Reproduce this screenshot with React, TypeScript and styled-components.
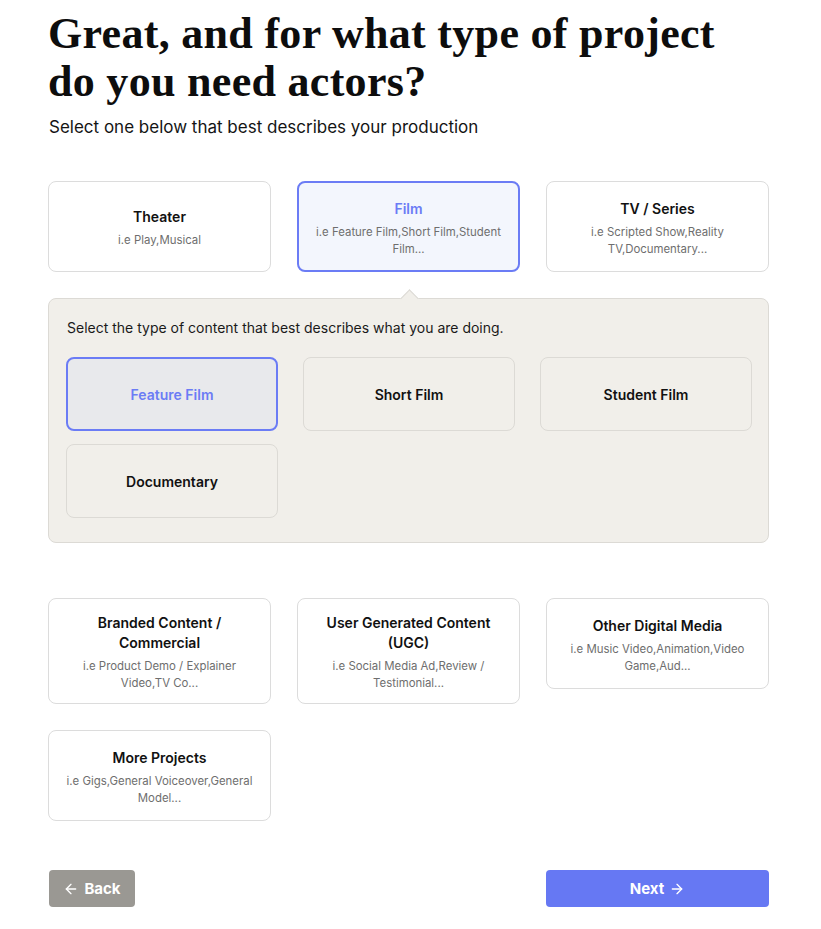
import React, { FC, useState } from 'react';
import styled, { createGlobalStyle, css } from 'styled-components';
import { ArrowLeft, ArrowRight } from 'lucide-react';

type Project = { id: string; title: string; hint: string };
type ContentType = { id: string; label: string };

const topProjects: Project[] = [
	{ id: 'theater', title: 'Theater', hint: 'i.e Play,Musical' },
	{ id: 'film', title: 'Film', hint: 'i.e Feature Film,Short Film,Student Film...' },
	{ id: 'tv', title: 'TV / Series', hint: 'i.e Scripted Show,Reality TV,Documentary...' },
];

const moreProjects: Project[] = [
	{ id: 'branded', title: 'Branded Content / Commercial', hint: 'i.e Product Demo / Explainer Video,TV Co...' },
	{ id: 'ugc', title: 'User Generated Content (UGC)', hint: 'i.e Social Media Ad,Review / Testimonial...' },
	{ id: 'digital', title: 'Other Digital Media', hint: 'i.e Music Video,Animation,Video Game,Aud...' },
	{ id: 'more', title: 'More Projects', hint: 'i.e Gigs,General Voiceover,General Model...' },
];

const filmTypes: ContentType[] = [
	{ id: 'feature', label: 'Feature Film' },
	{ id: 'short', label: 'Short Film' },
	{ id: 'student', label: 'Student Film' },
	{ id: 'doc', label: 'Documentary' },
];

const ProjectType: FC = () => {
	const [project, setProject] = useState('film');
	const [content, setContent] = useState('feature');

	const renderCard = (p: Project) => (
		<Card key={p.id} active={project === p.id} onClick={() => setProject(p.id)}>
			<CardTitle active={project === p.id}>{p.title}</CardTitle>
			<CardHint>{p.hint}</CardHint>
		</Card>
	);

	return (
		<Page>
			<GlobalStyle />
			<Heading>Great, and for what type of project do you need actors?</Heading>
			<Lead>Select one below that best describes your production</Lead>

			<Grid>
				{topProjects.map(renderCard)}

				<Panel>
					<Caret />
					<PanelLead>Select the type of content that best describes what you are doing.</PanelLead>
					<SubGrid>
						{filmTypes.map((t) => (
							<SubOption key={t.id} active={content === t.id} onClick={() => setContent(t.id)}>
								{t.label}
							</SubOption>
						))}
					</SubGrid>
				</Panel>

				{moreProjects.map(renderCard)}
			</Grid>

			<Footer>
				<BackButton>
					<ArrowLeft size={16} strokeWidth={2} />
					Back
				</BackButton>
				<NextButton>
					Next
					<ArrowRight size={16} strokeWidth={2} />
				</NextButton>
			</Footer>
		</Page>
	);
};

const GlobalStyle = createGlobalStyle`
	body {
		margin: 0;
		background: #ffffff;
		font-family: Inter, 'Noto Sans', sans-serif;
		color: #111111;
	}
`;

const Page = styled.div`
	width: 721px;
	padding: 10px 0 22px 48px;
`;

const Heading = styled.h1`
	font-family: 'Liberation Serif', 'DejaVu Serif', serif;
	font-weight: 700;
	font-size: 44px;
	line-height: 48px;
	letter-spacing: 0.3px;
	color: #0d0d0d;
	margin: 0 0 10px 0;
	max-width: 700px;
`;

const Lead = styled.p`
	font-size: 17px;
	line-height: 22px;
	color: #141414;
	margin: 0 0 43px 1px;
`;

const Grid = styled.div`
	display: grid;
	grid-template-columns: repeat(3, 223px);
	column-gap: 26px;
	row-gap: 26px;
	align-items: start;
`;

const Card = styled.div<{ active?: boolean }>`
	box-sizing: border-box;
	min-height: 91px;
	padding: 14px 16px 11px;
	display: flex;
	flex-direction: column;
	justify-content: center;
	align-items: center;
	text-align: center;
	background: #ffffff;
	border: 1px solid #dcdcdc;
	border-radius: 8px;
	cursor: pointer;

	${({ active }) =>
		active &&
		css`
			background: #f3f6fd;
			border: 2px solid #6b7cf5;
			padding: 13px 15px 10px;
		`}
`;

const CardTitle = styled.div<{ active?: boolean }>`
	font-size: 14px;
	line-height: 20px;
	font-weight: 600;
	color: ${({ active }) => (active ? '#6b7cf5' : '#111111')};
`;

const CardHint = styled.div`
	font-size: 11.4px;
	line-height: 17px;
	color: #6e6e6e;
	margin-top: 5px;
`;

const Panel = styled.div`
	grid-column: 1 / -1;
	position: relative;
	box-sizing: border-box;
	background: #f1efea;
	border: 1px solid #dcdad5;
	border-radius: 8px;
	padding: 19px 17px 24px;
	margin-bottom: 29px;
`;

const Caret = styled.span`
	position: absolute;
	top: -7px;
	left: 354px;
	width: 12px;
	height: 12px;
	background: #f1efea;
	border-top: 1px solid #dcdad5;
	border-left: 1px solid #dcdad5;
	transform: rotate(45deg);
`;

const PanelLead = styled.p`
	font-size: 14px;
	line-height: 20px;
	color: #1a1a1a;
	margin: 0 0 19px 1px;
`;

const SubGrid = styled.div`
	display: grid;
	grid-template-columns: repeat(3, 212px);
	column-gap: 25px;
	row-gap: 13px;
`;

const SubOption = styled.div<{ active?: boolean }>`
	box-sizing: border-box;
	height: 74px;
	display: flex;
	align-items: center;
	justify-content: center;
	font-size: 14px;
	font-weight: 600;
	color: #111111;
	border: 1px solid #dcdad5;
	border-radius: 8px;
	cursor: pointer;

	${({ active }) =>
		active &&
		css`
			background: #e8e9ec;
			border: 2px solid #6b7cf5;
			color: #6b7cf5;
		`}
`;

const Footer = styled.div`
	display: flex;
	justify-content: space-between;
	margin-top: 49px;
`;

const Button = styled.button`
	display: flex;
	align-items: center;
	justify-content: center;
	gap: 5px;
	height: 37px;
	border: none;
	border-radius: 4px;
	color: #ffffff;
	font-family: Inter, 'Noto Sans', sans-serif;
	font-size: 15px;
	font-weight: 700;
	cursor: pointer;
`;

const BackButton = styled(Button)`
	width: 86px;
	margin-left: 1px;
	background: #9a9893;
`;

const NextButton = styled(Button)`
	width: 223px;
	background: #6678f3;
`;

export default ProjectType;
